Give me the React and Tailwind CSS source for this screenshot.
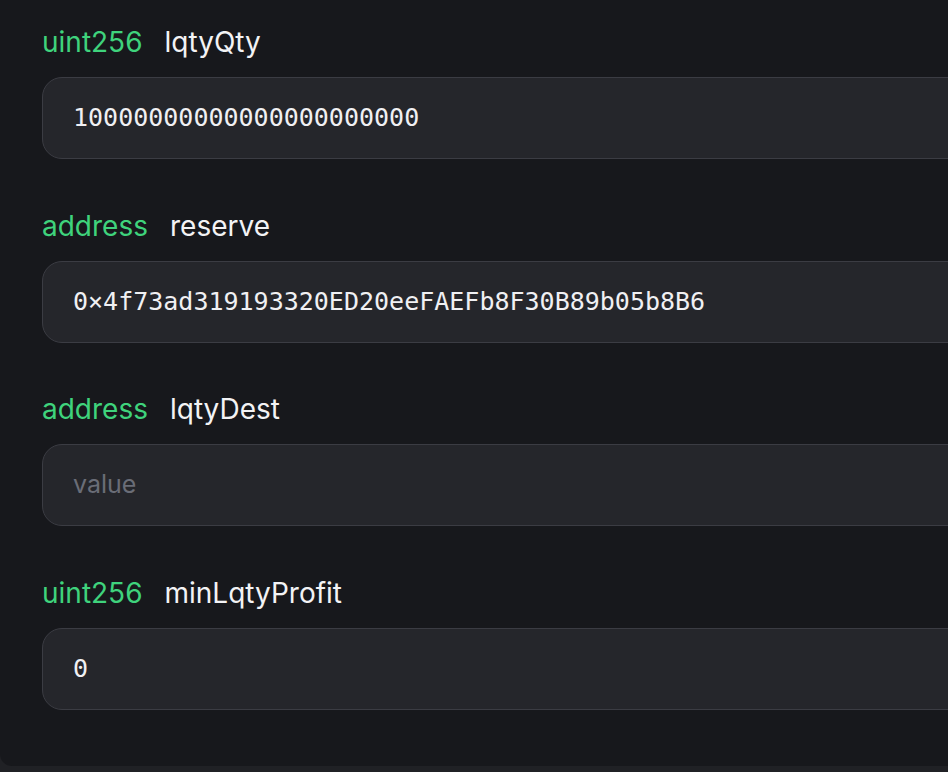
import React from "react";

const fields = [
  { type: "uint256", name: "lqtyQty", value: "10000000000000000000000" },
  { type: "address", name: "reserve", value: "0×4f73ad319193320ED20eeFAEFb8F30B89b05b8B6" },
  { type: "address", name: "lqtyDest", value: "" },
  { type: "uint256", name: "minLqtyProfit", value: "0" },
];

const Field = ({ field }) => (
  <div className="flex flex-col">
    {/* label */}
    <div className="flex items-center h-[32px] text-[28px] leading-[32px] font-['Inter',sans-serif]">
      <span className="text-[#3fd37c] mr-[22px]">{field.type}</span>
      <span className="text-[#f3f3f5]">{field.name}</span>
    </div>
    {/* input */}
    <div className="mt-[19px] h-[82px] w-[1000px] rounded-[20px] border border-[#3b3c43] bg-[#25262b] flex items-center pl-[30px]">
      {field.value ? (
        <span className="text-[25px] text-[#f0f0f3] font-['DejaVu_Sans_Mono',monospace]">
          {field.value}
        </span>
      ) : (
        <span className="text-[25px] text-[#6a6d77] font-['Inter',sans-serif]">value</span>
      )}
    </div>
  </div>
);

export default function App() {
  return (
    <div className="w-[948px] h-[772px] overflow-hidden bg-[#202125]">
      <div className="h-[766px] bg-[#17181c] rounded-bl-[12px] pt-[26px] pl-[42px] flex flex-col gap-[50.5px]">
        {fields.map((f) => (
          <Field key={f.name} field={f} />
        ))}
      </div>
    </div>
  );
}
